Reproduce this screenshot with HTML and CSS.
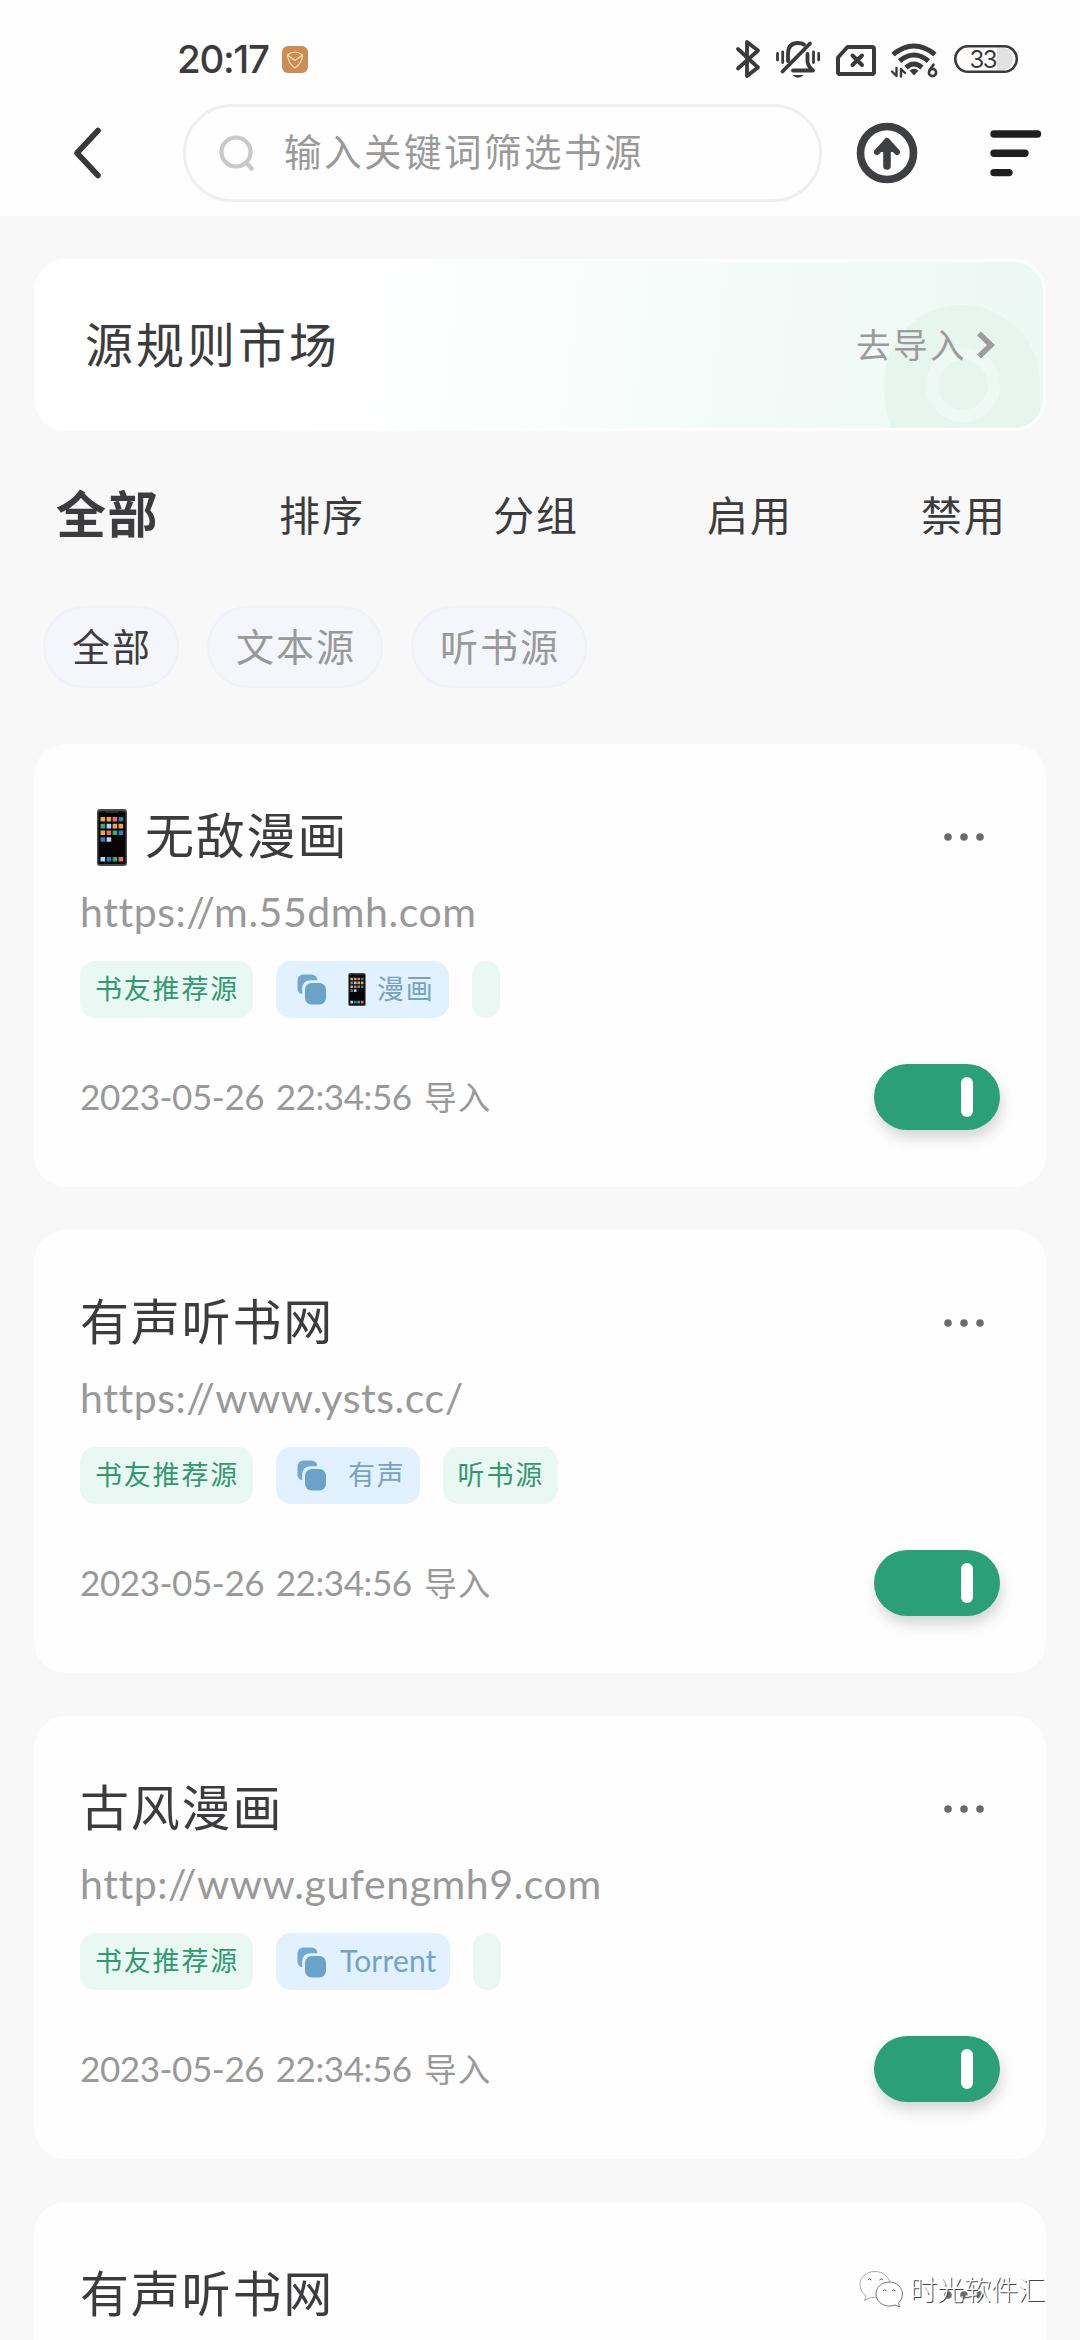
FILE: index.html
```html
<!DOCTYPE html>
<html lang="zh-CN">
<head>
<meta charset="utf-8">
<title>书源</title>
<link rel="stylesheet" href="styles.css">
</head>
<body>
<svg class="defs" width="0" height="0">
  <symbol id="phone" viewBox="0 0 30 57">
    <rect width="30" height="57" rx="3" fill="#4a4a4c"/>
    <rect x="1.5" y="2.5" width="27" height="52.5" rx="1.5" fill="#050505"/>
    <rect x="9" y="2" width="12" height="2" fill="#2b2b2d"/>
    <g fill="#f2a14e"><path d="M3.5 8h4.6v4.6h-4.6zM9.6 8h4.6v4.6h-4.6zM15.6 14.8h4.6v4.6h-4.6zM21.6 14.8h4.6v4.6h-4.6zM3.5 21.5h4.6v4.6h-4.6z"/></g>
    <g fill="#ef6a6a"><path d="M15.6 8h4.6v4.6h-4.6zM9.6 21.5h4.6v4.6h-4.6zM21.6 48h4.6v4.6h-4.6z"/></g>
    <g fill="#2b83b8"><path d="M21.6 8h4.6v4.6h-4.6zM21.6 21.5h4.6v4.6h-4.6zM3.5 28.2h4.6v4.6h-4.6zM9.6 48h4.6v4.6h-4.6z"/></g>
    <g fill="#39a77f"><path d="M3.5 14.8h4.6v4.6h-4.6zM15.6 21.5h4.6v4.6h-4.6zM15.6 48h4.6v4.6h-4.6z"/></g>
    <g fill="#a8d8f5"><path d="M9.6 14.8h4.6v4.6h-4.6zM9.6 28.2h4.6v4.6h-4.6zM3.5 48h4.6v4.6h-4.6z"/></g>
  </symbol>
  <symbol id="group" viewBox="0 0 30 31">
    <rect x=".5" y=".5" width="20" height="20" rx="6" fill="#72a8cf"/>
    <rect x="5.2" y="6.2" width="25" height="26" rx="8" fill="#e1f1fe"/>
    <rect x="8" y="9" width="21" height="21.5" rx="6.5" fill="#6aa2ca"/>
  </symbol>
  <symbol id="dots" viewBox="0 0 40 8"><circle cx="4" cy="4" r="3.8"/><circle cx="20" cy="4" r="3.8"/><circle cx="36" cy="4" r="3.8"/></symbol>
</svg>

<header class="top">
  <div class="status">
    <span class="clock">20:17</span>
    <svg class="app" width="26" height="27" viewBox="0 0 26 27"><rect width="26" height="27" rx="6" fill="#cb8c55"/><path d="M5.500 9Q13 3 20.500 9Q20 17 13 22Q6 17 5.500 9L13 14.500L20.500 9" fill="none" stroke="#ffdfae" stroke-width="1.200" stroke-linejoin="round"/></svg>
    <svg class="sys" width="290" height="44" viewBox="730 36 290 44" fill="none" stroke="#3a3a3c" stroke-width="4" stroke-linecap="round" stroke-linejoin="round">
      <path d="M738 49L758 67.500L747 76V42L758 50.500L738 68.500" stroke-width="3.800"/>
      <g stroke-width="3.800"><path d="M810 43.500L782.500 71.500"/><path d="M788 61V54Q788 43 798 43Q801.500 43 804 44.500"/><path d="M807.500 54V62Q808.500 67 813 70.500H793"/><path d="M777.500 53.500V60M782.700 52V62.500M813.500 52V62.500M818.700 53.500V60" stroke-width="2.800"/></g>
      <path d="M792.500 75H803.500Q798 80.500 792.500 75Z" fill="#3a3a3c" stroke="none"/>
      <path d="M847.500 47H872Q874 47 874 49V72Q874 74 872 74H840Q838 74 838 72V57.500Z"/>
      <path d="M852.500 55.500L862 65M862 55.500L852.500 65" stroke-width="4"/>
      <g stroke-width="5" stroke-linecap="butt"><path d="M893 54.500Q914 37.500 935 54.500"/><path d="M899.500 61Q914 49 928.500 61"/><path d="M906 67.500Q914 60.500 922 67.500"/></g>
      <path d="M909.500 70.500Q914 67 918.500 70.500L914 75.500Z" fill="#3a3a3c" stroke="none"/>
      <path d="M896.500 68V76L892 71.500M901 76.500V69L905 73" stroke-width="2.400"/>
      <circle cx="932.500" cy="72.500" r="3.600" stroke-width="2.600"/><path d="M933.500 64.500L929.500 70.500" stroke-width="2.600"/>
      <path d="M997 47.500H1003Q1013 49 1013 59Q1013 69 1003 70.500H997Z" fill="#e2e2e2" stroke="none"/>
      <rect x="955.300" y="46.300" width="61.500" height="25.500" rx="12.700" stroke-width="2.600"/>
      <text x="969.500" y="67.500" class="bat">33</text>
    </svg>
  </div>
  <div class="bar">
    <svg class="back" width="31" height="54" viewBox="0 0 31 54"><path d="M26 4.500L5 27L26 49.500" fill="none" stroke="#38383b" stroke-width="5.600" stroke-linecap="round" stroke-linejoin="round"/></svg>
    <div class="search">
      <svg width="36" height="37" viewBox="0 0 36 37" fill="none" stroke="#c9c9c9" stroke-linecap="round"><circle cx="17" cy="17" r="14.500" stroke-width="4.200"/><path d="M27.500 28L32.500 33.500" stroke-width="4.500"/></svg>
      <span>输入关键词筛选书源</span>
    </div>
    <svg class="up" width="62" height="62" viewBox="0 0 62 62" fill="none" stroke="#3e3f43" stroke-width="7.600" stroke-linecap="round" stroke-linejoin="round"><circle cx="31" cy="31" r="26.500"/><path d="M31 44V21"/><path d="M21 30L31 19L41 30" fill="#3e3f43" stroke-width="6"/></svg>
    <svg class="menu" width="52" height="48" viewBox="0 0 52 48" stroke="#1f1f1f" stroke-width="7.400" stroke-linecap="round"><path d="M4 5H47.500M4 24.300H35M4 43.600H19"/></svg>
  </div>
</header>

<main>
  <section class="banner">
    <svg class="deco" width="160" height="130" viewBox="0 0 160 130"><path d="M8 130Q0 108 0 80A78 78 0 0 1 156 80V130Z" fill="#e7f5ef"/><circle cx="79" cy="82" r="31" fill="none" stroke="#eef9f5" stroke-width="12"/></svg>
    <span class="market">源规则市场</span>
    <span class="go">去导入</span>
    <svg class="chev" width="20" height="30" viewBox="0 0 20 30"><path d="M3 3.500L15 15L3 26.500" fill="none" stroke="#9a9d9c" stroke-width="5.500"/></svg>
  </section>

  <nav class="tabs"><b>全部</b><span>排序</span><span>分组</span><span>启用</span><span>禁用</span></nav>
  <div class="chips"><span class="on">全部</span><span>文本源</span><span>听书源</span></div>

  <section class="list">
    <article class="card">
      <div class="head"><svg class="ph" width="30" height="57"><use href="#phone"/></svg><h2>无敌漫画</h2><svg class="more" width="40" height="8"><use href="#dots"/></svg></div>
      <p class="url">https://m.55dmh.com</p>
      <div class="tags"><span class="tag">书友推荐源</span><span class="tag blue"><svg width="30" height="31"><use href="#group"/></svg><svg class="mini" width="18" height="33"><use href="#phone"/></svg>漫画</span><span class="tag none"></span></div>
      <div class="foot"><span class="date">2023-05-26 22:34:56 <i>导入</i></span><span class="switch"></span></div>
    </article>
    <article class="card">
      <div class="head"><h2>有声听书网</h2><svg class="more" width="40" height="8"><use href="#dots"/></svg></div>
      <p class="url">https://www.ysts.cc/</p>
      <div class="tags"><span class="tag">书友推荐源</span><span class="tag blue far"><svg width="30" height="31"><use href="#group"/></svg>有声</span><span class="tag">听书源</span></div>
      <div class="foot"><span class="date">2023-05-26 22:34:56 <i>导入</i></span><span class="switch"></span></div>
    </article>
    <article class="card">
      <div class="head"><h2>古风漫画</h2><svg class="more" width="40" height="8"><use href="#dots"/></svg></div>
      <p class="url">http://www.gufengmh9.com</p>
      <div class="tags"><span class="tag">书友推荐源</span><span class="tag blue latin"><svg width="30" height="31"><use href="#group"/></svg>Torrent</span><span class="tag none"></span></div>
      <div class="foot"><span class="date">2023-05-26 22:34:56 <i>导入</i></span><span class="switch"></span></div>
    </article>
    <article class="card">
      <div class="head"><h2>有声听书网</h2><svg class="more" width="40" height="8"><use href="#dots"/></svg></div>
    </article>
  </section>
</main>

<div class="mark">
  <svg width="46" height="40" viewBox="0 0 46 40" fill="#fff" stroke="#777" stroke-width="1" stroke-linejoin="round"><path d="M16 1.500C7.500 1.500 1 7.500 1 14.500Q1 21.500 7 26L5.500 30.500L11.500 27.500Q30 30 31 14.500C31 7.500 24.500 1.500 16 1.500Z" stroke="#aaa"/><path d="M30 12C22.500 12 17 17.500 17 24C17 31 23 36 30.500 36Q33 36 36 35L40.500 37L39.500 33Q43.500 30 43.500 24C43.500 17.500 37.500 12 30 12Z"/><path d="M9 10q1.500-2.500 3.500 0M20.500 10q1.500-2.500 3.500 0M24 21q1.500-2.500 3.500 0M33 21q1.500-2.500 3.500 0" fill="none" stroke="#555"/></svg>
  <span>时光软件汇</span>
</div>
</body>
</html>
```
FILE: styles.css
```css
* { box-sizing: border-box; margin: 0; padding: 0; }
body {
  width: 1080px;
  height: 2340px;
  overflow: hidden;
  position: relative;
  background: #f8f8f9;
  color: #3c3c3e;
  font-family: "Noto Sans CJK SC", sans-serif;
}
svg { display: block; flex: none; }
span, h2, b, p { white-space: nowrap; }
.defs { position: absolute; }

.top { height: 216px; background: #fefefe; }
.status { height: 104px; padding: 36px 60px 0 177px; display: flex; align-items: flex-start; }
.clock { width: 105px; font: 500 38.500px/46px Inter, sans-serif; letter-spacing: -1.300px; }
.app { margin-top: 10px; }
.sys { margin-left: auto; }
.bat { font: 24px Inter, sans-serif; fill: #3a3a3c; stroke: none; letter-spacing: -1.500px; }
.bar { display: flex; align-items: center; height: 98px; padding-left: 72px; }
.search {
  display: flex; align-items: center;
  width: 639px; height: 98px; margin-left: 80px; padding-left: 33px;
  border: 3px solid #efefef; border-radius: 49px;
  color: #999; font-size: 37.500px; letter-spacing: 2.500px;
}
.search span { margin-left: 29px; line-height: 50px; margin-top: -6px; }
.up { margin-left: 34px; }
.menu { margin-left: 72px; }

main { padding: 43px 34px 0; }
.banner {
  position: relative; display: flex; align-items: center;
  height: 172px; padding-left: 48px;
  border: 3px solid #fff; border-radius: 32px; overflow: hidden;
  background: linear-gradient(97deg, #fff 25%, #fcfefd 45%, #f3fbf8 68%, #ecf8f4 100%);
}
.deco { position: absolute; right: -1px; bottom: -5px; }
.market { font-size: 48px; letter-spacing: 3px; line-height: 60px; margin-top: -6px; position: relative; }
.go { margin-left: auto; font-size: 34.500px; letter-spacing: 2.500px; line-height: 44px; color: #999c9b; position: relative; margin-top: -5px; }
.chev { margin: 0 47px 0 9px; position: relative; }

.tabs { display: flex; align-items: center; height: 100px; margin-top: 32px; padding-left: 22px; font-size: 41px; letter-spacing: 2px; }
.tabs b { font-size: 50px; letter-spacing: 1.500px; width: 223px; margin-top: -5px; }
.tabs span { width: 214px; }
.tabs span:last-child { width: auto; }

.chips { display: flex; gap: 28px; margin: 43px 0 0 9px; }
.chips span {
  height: 82px; line-height: 74px; padding: 0 25px 0 27px;
  border: 2px solid #f0f2f5; border-radius: 41px; background: #f4f6fb;
  color: #999; font-size: 38px; letter-spacing: 2px;
}
.chips .on { color: #3c3c3e; }

.list { display: flex; flex-direction: column; gap: 43px; margin-top: 56px; }
.card { height: 443px; padding: 58px 46px 0; border-radius: 32px; background: #fefefe; }
.card:last-child { height: 138px; border-radius: 32px 32px 0 0; }
.head { display: flex; align-items: center; height: 68px; }
.ph { margin: 2px 18px 0 17px; }
h2 { font-size: 49px; font-weight: 400; letter-spacing: 1.800px; line-height: 68px; margin-top: -6px; }
.more { margin: 2px 16px 0 auto; fill: #6a6a6a; }
.url { height: 60px; margin-top: 12px; font: 41px/60px Lato, sans-serif; letter-spacing: .550px; font-variant-ligatures: none; color: #999; }
.tags { display: flex; gap: 23px; margin-top: 19px; }
.tag {
  display: flex; align-items: center; height: 57px; padding: 0 14px 5px 15px; border-radius: 15px;
  background: #eaf8f3; color: #30996f; font-size: 27px; letter-spacing: 1.800px;
}
.blue { background: #e1f1fe; color: #74a3c4; padding-left: 21px; }
.tag svg { margin-top: 4px; }
.tag .mini { margin: 4px 11px 0 21px; }
.far svg { margin-right: 21px; }
.latin svg { margin-right: 13px; }
.latin { font-family: Lato, sans-serif; font-size: 30px; letter-spacing: .150px; padding-bottom: 3px; }
.none { width: 28px; padding: 0; border-radius: 14px; }
.foot { display: flex; justify-content: space-between; align-items: center; height: 66px; margin-top: 46px; }
.date { font: 35px/64px Lato, sans-serif; letter-spacing: -.420px; word-spacing: 3px; color: #999; margin-top: -2px; }
.date i { font: 32.500px "Noto Sans CJK SC", sans-serif; letter-spacing: 1px; margin-left: 1px; }
.switch {
  width: 126px; height: 66px; padding: 13px 0 0 87px; border-radius: 33px;
  background: #2b9f78; box-shadow: 2px 8px 14px rgba(0, 0, 0, .16);
}
.switch::before { content: ""; display: block; width: 12px; height: 40px; border-radius: 6px; background: #fff; }

.mark { position: absolute; left: 859px; top: 2270px; display: flex; }
.mark span {
  margin-left: 5px; font-size: 27px; line-height: 38px; font-weight: 300; color: #fff;
  text-shadow: 1px 1px .500px #444;
}
```
